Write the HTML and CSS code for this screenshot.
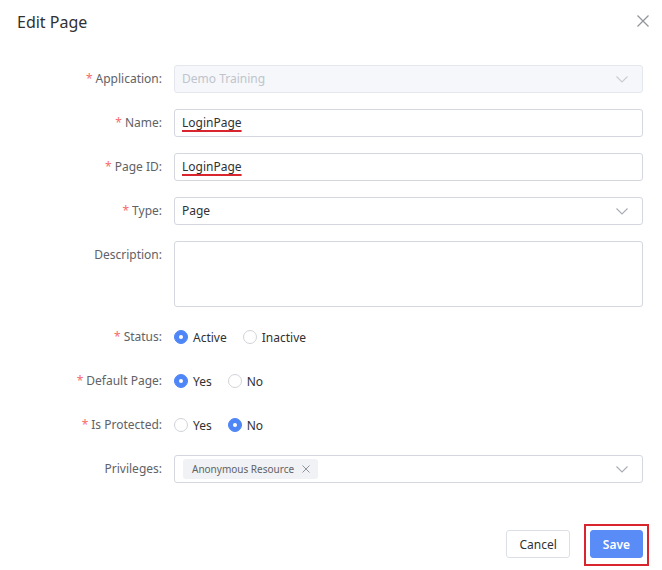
FILE: index.html
```html
<!DOCTYPE html>
<html lang="en">
<head>
<meta charset="utf-8">
<title>Edit Page</title>
<link rel="stylesheet" href="styles.css">
</head>
<body>
<div class="dialog">
  <div class="header">
    <span class="title">Edit Page</span>
    <button class="close" type="button" aria-label="Close">
      <svg width="12" height="12" viewBox="0 0 12 12"><path d="M0.5 0.5L11.5 11.5M11.5 0.5L0.5 11.5" stroke="#909399" stroke-width="1.2" fill="none"/></svg>
    </button>
  </div>
  <form class="form">
    <div class="row">
      <label class="label"><span class="req">*</span>Application:</label>
      <div class="control">
        <div class="field select disabled"><span class="value">Demo Training</span>
          <svg class="chev" width="12" height="7" viewBox="0 0 12 7"><path d="M0.5 0.5L6 6L11.5 0.5" stroke="#c8cbd1" stroke-width="1.1" fill="none"/></svg>
        </div>
      </div>
    </div>
    <div class="row">
      <label class="label"><span class="req">*</span>Name:</label>
      <div class="control"><div class="field"><span class="value marked">LoginPage</span></div></div>
    </div>
    <div class="row">
      <label class="label"><span class="req">*</span>Page ID:</label>
      <div class="control"><div class="field"><span class="value marked">LoginPage</span></div></div>
    </div>
    <div class="row">
      <label class="label"><span class="req">*</span>Type:</label>
      <div class="control">
        <div class="field select"><span class="value">Page</span>
          <svg class="chev" width="12" height="7" viewBox="0 0 12 7"><path d="M0.5 0.5L6 6L11.5 0.5" stroke="#a8abb2" stroke-width="1.1" fill="none"/></svg>
        </div>
      </div>
    </div>
    <div class="row">
      <label class="label">Description:</label>
      <div class="control"><div class="field textarea"></div></div>
    </div>
    <div class="row">
      <label class="label"><span class="req">*</span>Status:</label>
      <div class="control radios">
        <span class="radio checked"><span class="dot"></span>Active</span>
        <span class="radio"><span class="dot"></span>Inactive</span>
      </div>
    </div>
    <div class="row">
      <label class="label"><span class="req">*</span>Default Page:</label>
      <div class="control radios">
        <span class="radio checked"><span class="dot"></span>Yes</span>
        <span class="radio"><span class="dot"></span>No</span>
      </div>
    </div>
    <div class="row">
      <label class="label"><span class="req">*</span>Is Protected:</label>
      <div class="control radios">
        <span class="radio"><span class="dot"></span>Yes</span>
        <span class="radio checked"><span class="dot"></span>No</span>
      </div>
    </div>
    <div class="row">
      <label class="label">Privileges:</label>
      <div class="control">
        <div class="field select tags">
          <span class="tag">Anonymous Resource
            <svg width="8" height="8" viewBox="0 0 8 8"><path d="M0.5 0.5L7.5 7.5M7.5 0.5L0.5 7.5" stroke="#909399" stroke-width="1" fill="none"/></svg>
          </span>
          <svg class="chev" width="12" height="7" viewBox="0 0 12 7"><path d="M0.5 0.5L6 6L11.5 0.5" stroke="#a8abb2" stroke-width="1.1" fill="none"/></svg>
        </div>
      </div>
    </div>
  </form>
  <div class="footer">
    <button class="btn" type="button">Cancel</button>
    <button class="btn primary" type="button">Save</button>
  </div>
</div>
</body>
</html>
```
FILE: styles.css
```css
* { box-sizing: border-box; }
html, body { margin: 0; padding: 0; background: #fff; }
body {
  font-family: "Noto Sans", "Open Sans", sans-serif;
  font-size: 12px;
  color: #606266;
}
.dialog {
  width: 662px;
  height: 570px;
  background: #fff;
}
.header {
  display: flex;
  justify-content: space-between;
  align-items: center;
  padding: 11px 13px 0 17px;
  height: 33px;
}
.title {
  font-size: 16px;
  line-height: 22px;
  color: #303133;
}
.close {
  border: 0;
  background: none;
  padding: 0;
  width: 12px;
  height: 12px;
  display: flex;
  margin-top: -2px;
}
.form {
  margin-top: 32px;
  padding-right: 19px;
}
.row {
  display: grid;
  grid-template-columns: 162px 1fr;
  column-gap: 12px;
  margin-bottom: 16px;
}
.label {
  text-align: right;
  line-height: 28px;
  height: 28px;
  color: #606266;
  white-space: nowrap;
}
.req {
  color: #f56c6c;
  margin-right: 3px;
}
.field {
  height: 28px;
  border: 1px solid #d4d7dd;
  border-radius: 3px;
  display: flex;
  align-items: center;
  padding: 0 10px 0 7px;
  color: #303133;
  background: #fff;
}
.value { line-height: 20px; }
.marked {
  text-decoration: underline;
  text-decoration-color: #d9262e;
  text-decoration-thickness: 2px;
  text-underline-offset: 3px;
}
.select { justify-content: space-between; }
.select.disabled {
  background: #f5f7fa;
  border-color: #e4e7ed;
  color: #c0c4cc;
}
.chev { flex: none; margin-right: 4px; }
.textarea { height: 66px; }
.radios {
  display: flex;
  align-items: center;
  height: 28px;
  gap: 16px;
}
.radio {
  display: flex;
  align-items: center;
  color: #303133;
}
.dot {
  width: 14px;
  height: 14px;
  border-radius: 50%;
  border: 1px solid #d0d3d9;
  background: #fff;
  margin-right: 5px;
  display: flex;
  align-items: center;
  justify-content: center;
}
.radio.checked .dot {
  background: #4f86f7;
  border-color: #4f86f7;
}
.radio.checked .dot::after {
  content: "";
  width: 4px;
  height: 4px;
  border-radius: 50%;
  background: #fff;
}
.tags { padding-left: 8px; }
.tag {
  display: flex;
  align-items: center;
  gap: 8px;
  height: 20px;
  padding: 0 8px 0 9px;
  background: #f0f2f5;
  border-radius: 3px;
  font-size: 10px;
  color: #606266;
}
.footer {
  display: flex;
  justify-content: flex-end;
  gap: 20px;
  padding-right: 19px;
  margin-top: 47px;
}
.btn {
  height: 28px;
  padding: 0 12px;
  font-family: inherit;
  font-size: 12px;
  border: 1px solid #dcdfe6;
  border-radius: 3px;
  background: #fff;
  color: #303133;
}
.btn.primary {
  position: relative;
  background: #5a8cf7;
  border-color: #5a8cf7;
  color: #fff;
  font-weight: 600;
}
.btn.primary::after {
  content: "";
  position: absolute;
  left: -7px;
  right: -7px;
  top: -7px;
  bottom: -9px;
  border: 2px solid #d9262e;
}
```
